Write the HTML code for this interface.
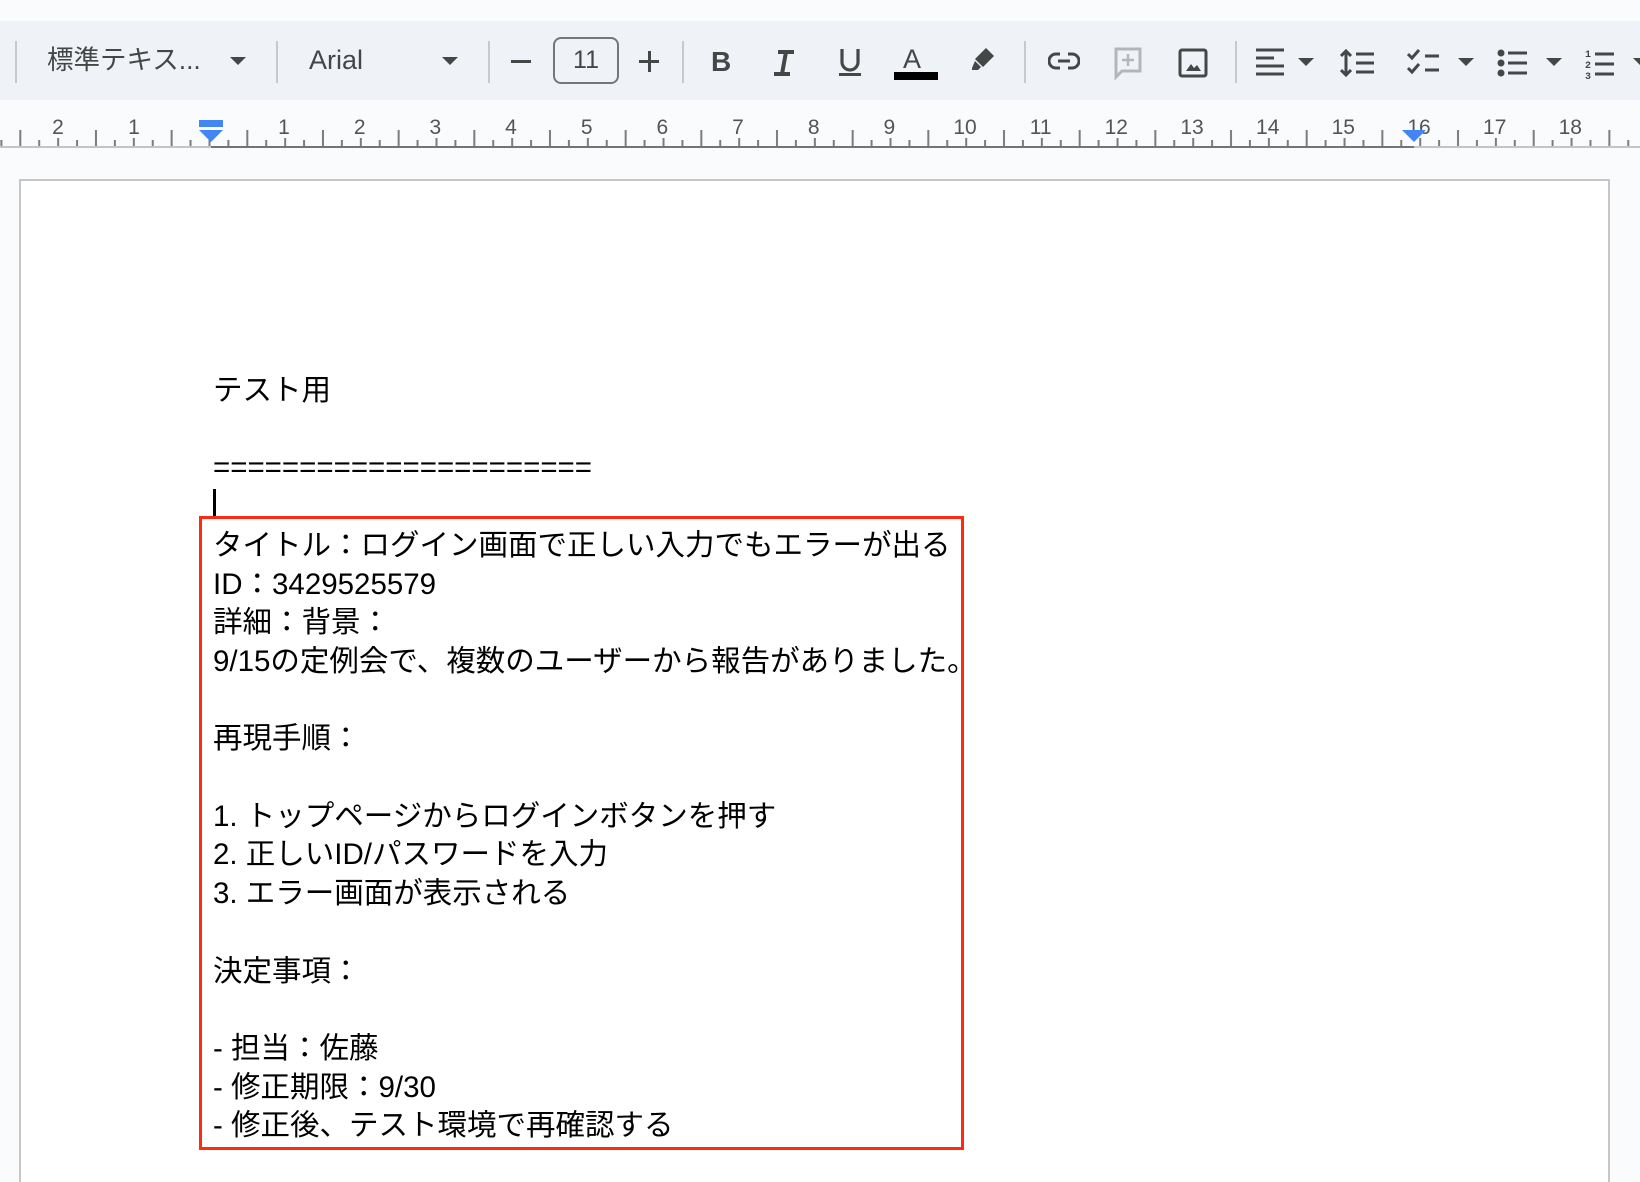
<!DOCTYPE html>
<html><head><meta charset="utf-8">
<style>
*{margin:0;padding:0;box-sizing:border-box}
html,body{width:1640px;height:1182px;overflow:hidden;background:#f9fbfd;font-family:"Liberation Sans","Noto Sans CJK JP",sans-serif}
.tb{position:absolute;left:0;top:21px;width:1640px;height:79px;background:#eff3f8}
.a{position:absolute}
.sep{position:absolute;top:20px;width:2px;height:42px;background:#c7c9cc}
.t{position:absolute;color:#444746;font-size:26px;top:19px;line-height:40px}
.car{position:absolute;top:36px;width:0;height:0;border-left:8px solid transparent;border-right:8px solid transparent;border-top:8px solid #444746}
.page{position:absolute;left:19px;top:179px;width:1591px;height:1003px;background:#fff;border:2px solid #c7c7c7;border-bottom:none}
.doc{position:absolute;left:213px;font-size:29.5px;line-height:38.7px;color:#000;white-space:pre;letter-spacing:0}
</style></head><body>
<div class="tb">
  <div class="sep" style="left:15px"></div>
  <div class="t" style="left:47px;font-size:26.5px">標準テキス...</div>
  <div class="car" style="left:230px"></div>
  <div class="sep" style="left:276px"></div>
  <div class="t" style="left:309px;font-size:27px">Arial</div>
  <div class="car" style="left:442px"></div>
  <div class="sep" style="left:488px"></div>
  <div class="a" style="left:511px;top:39px;width:20px;height:3px;background:#444746"></div>
  <div class="a" style="left:553px;top:16px;width:66px;height:47px;border:2px solid #747775;border-radius:8px;color:#444746;font-size:25px;text-align:center;line-height:43px">11</div>
  <div class="a" style="left:639px;top:39px;width:20px;height:3px;background:#444746"></div>
  <div class="a" style="left:648px;top:30px;width:3px;height:21px;background:#444746"></div>
  <div class="sep" style="left:682px"></div>
  <div class="t" style="left:711px;font-weight:bold;font-size:28px;top:21px">B</div>
  <svg class="a" style="left:770px;top:28px" width="28" height="28" viewBox="0 0 28 28"><path d="M8 3h16M4 25h16M16 3L12 25" stroke="#444746" stroke-width="4" fill="none"/></svg>
  <svg class="a" style="left:837px;top:26px" width="26" height="30" viewBox="0 0 26 30"><path d="M5 2v13a8 8 0 0 0 16 0V2" stroke="#444746" stroke-width="3.2" fill="none"/><rect x="2" y="26" width="22" height="3" fill="#444746"/></svg>
  <div class="t" style="left:903px;font-size:27px;top:18px">A</div>
  <div class="a" style="left:894px;top:51px;width:44px;height:8px;background:#000"></div>
  <svg class="a" style="left:969px;top:24px" width="28" height="28" viewBox="0 0 28 28"><path d="M17 3l8 8-11 11-8-8z" fill="#444746"/><path d="M6 16l6 6-3 3H3v-2z" fill="#444746"/></svg>
  <div class="sep" style="left:1024px"></div>
  <svg class="a" style="left:1048px;top:28px" width="32" height="24" viewBox="0 0 32 24"><path d="M12 5H8a7 7 0 0 0 0 14h4M20 5h4a7 7 0 0 1 0 14h-4M10 12h12" stroke="#444746" stroke-width="3" fill="none"/></svg>
  <svg class="a" style="left:1113px;top:25px" width="30" height="34" viewBox="0 0 30 34"><path d="M3 3h24v22H9l-6 6z" fill="none" stroke="#b4b7ba" stroke-width="3"/><path d="M15 8v12M9 14h12" stroke="#b4b7ba" stroke-width="2.5"/></svg>
  <svg class="a" style="left:1178px;top:26px" width="30" height="32" viewBox="0 0 30 32"><rect x="2" y="3" width="26" height="26" rx="2" fill="none" stroke="#444746" stroke-width="3"/><path d="M8 24l5-7 3 4 3-3 4 6z" fill="#444746"/></svg>
  <div class="sep" style="left:1235px"></div>
  <svg class="a" style="left:1256px;top:27px" width="30" height="30" viewBox="0 0 30 30"><path d="M0 2h28M0 10h18M0 18h28M0 26h28" stroke="#444746" stroke-width="3"/></svg>
  <div class="car" style="left:1298px;top:37px"></div>
  <svg class="a" style="left:1340px;top:27px" width="36" height="30" viewBox="0 0 36 30"><path d="M6 3v24M1 8l5-5 5 5M1 22l5 5 5-5M16 6h18M16 15h18M16 24h18" stroke="#444746" stroke-width="3" fill="none"/></svg>
  <svg class="a" style="left:1407px;top:27px" width="36" height="30" viewBox="0 0 36 30"><path d="M1 6l4 4 7-8M1 20l4 4 7-8M18 8h14M18 22h14" stroke="#444746" stroke-width="3" fill="none"/></svg>
  <div class="car" style="left:1458px;top:37px"></div>
  <svg class="a" style="left:1497px;top:27px" width="32" height="30" viewBox="0 0 32 30"><circle cx="4" cy="5" r="3.5" fill="#444746"/><circle cx="4" cy="15" r="3.5" fill="#444746"/><circle cx="4" cy="25" r="3.5" fill="#444746"/><path d="M11 5h19M11 15h19M11 25h19" stroke="#444746" stroke-width="3"/></svg>
  <div class="car" style="left:1546px;top:37px"></div>
  <svg class="a" style="left:1585px;top:25px" width="32" height="34" viewBox="0 0 32 34"><text x="0" y="11" font-size="10" font-family="Liberation Mono" fill="#444746" font-weight="bold">1</text><text x="0" y="22" font-size="10" font-family="Liberation Mono" fill="#444746" font-weight="bold">2</text><text x="0" y="33" font-size="10" font-family="Liberation Mono" fill="#444746" font-weight="bold">3</text><path d="M10 8h19M10 18h19M10 28h19" stroke="#444746" stroke-width="3"/></svg>
  <div class="car" style="left:1633px;top:37px"></div>
</div>

<svg class="a" style="left:0;top:100px" width="1640" height="50" viewBox="0 100 1640 50">
  <defs>
    <pattern id="tk" patternUnits="userSpaceOnUse" x="208.5" y="100" width="75.67" height="50">
      <path d="M1 38v8M19.9 40v6M38.8 30v16M57.7 40v6" stroke="#7c7c7c" stroke-width="2"/>
    </pattern>
  </defs>
  <rect x="0" y="100" width="1640" height="47" fill="url(#tk)"/>
  <rect x="0" y="146" width="1640" height="2" fill="#c4c4c4"/>
  <rect x="211" y="146" width="1203" height="2" fill="#747474"/>
  <g font-family="Liberation Sans" font-size="21" fill="#545454" text-anchor="middle">
    <text x="58" y="134">2</text><text x="134" y="134">1</text>
    <text x="284" y="134">1</text><text x="359.7" y="134">2</text><text x="435.3" y="134">3</text><text x="511" y="134">4</text><text x="586.7" y="134">5</text><text x="662.3" y="134">6</text><text x="738" y="134">7</text><text x="813.7" y="134">8</text><text x="889.3" y="134">9</text><text x="965" y="134">10</text><text x="1040.7" y="134">11</text><text x="1116.3" y="134">12</text><text x="1192" y="134">13</text><text x="1267.7" y="134">14</text><text x="1343.3" y="134">15</text><text x="1419" y="134">16</text><text x="1494.7" y="134">17</text><text x="1570.3" y="134">18</text>
  </g>
  <rect x="199" y="120" width="24" height="7" fill="#4285f4"/>
  <path d="M199 130h24l-12 12z" fill="#4285f4"/>
  <path d="M1402 130h24l-12 12z" fill="#4285f4"/>
</svg>

<div class="page"></div>
<div class="doc" style="top:372px">テスト用

======================

タイトル：ログイン画面で正しい入力でもエラーが出る
ID：3429525579
詳細：背景：
9/15の定例会で、複数のユーザーから報告がありました。

再現手順：

1. トップページからログインボタンを押す
2. 正しいID/パスワードを入力
3. エラー画面が表示される

決定事項：

- 担当：佐藤
- 修正期限：9/30
- 修正後、テスト環境で再確認する</div>
<div class="a" style="left:213px;top:489px;width:3px;height:30px;background:#000"></div>
<div class="a" style="left:199px;top:516px;width:765px;height:634px;border:3.5px solid #ff2a12"></div>
</body></html>
